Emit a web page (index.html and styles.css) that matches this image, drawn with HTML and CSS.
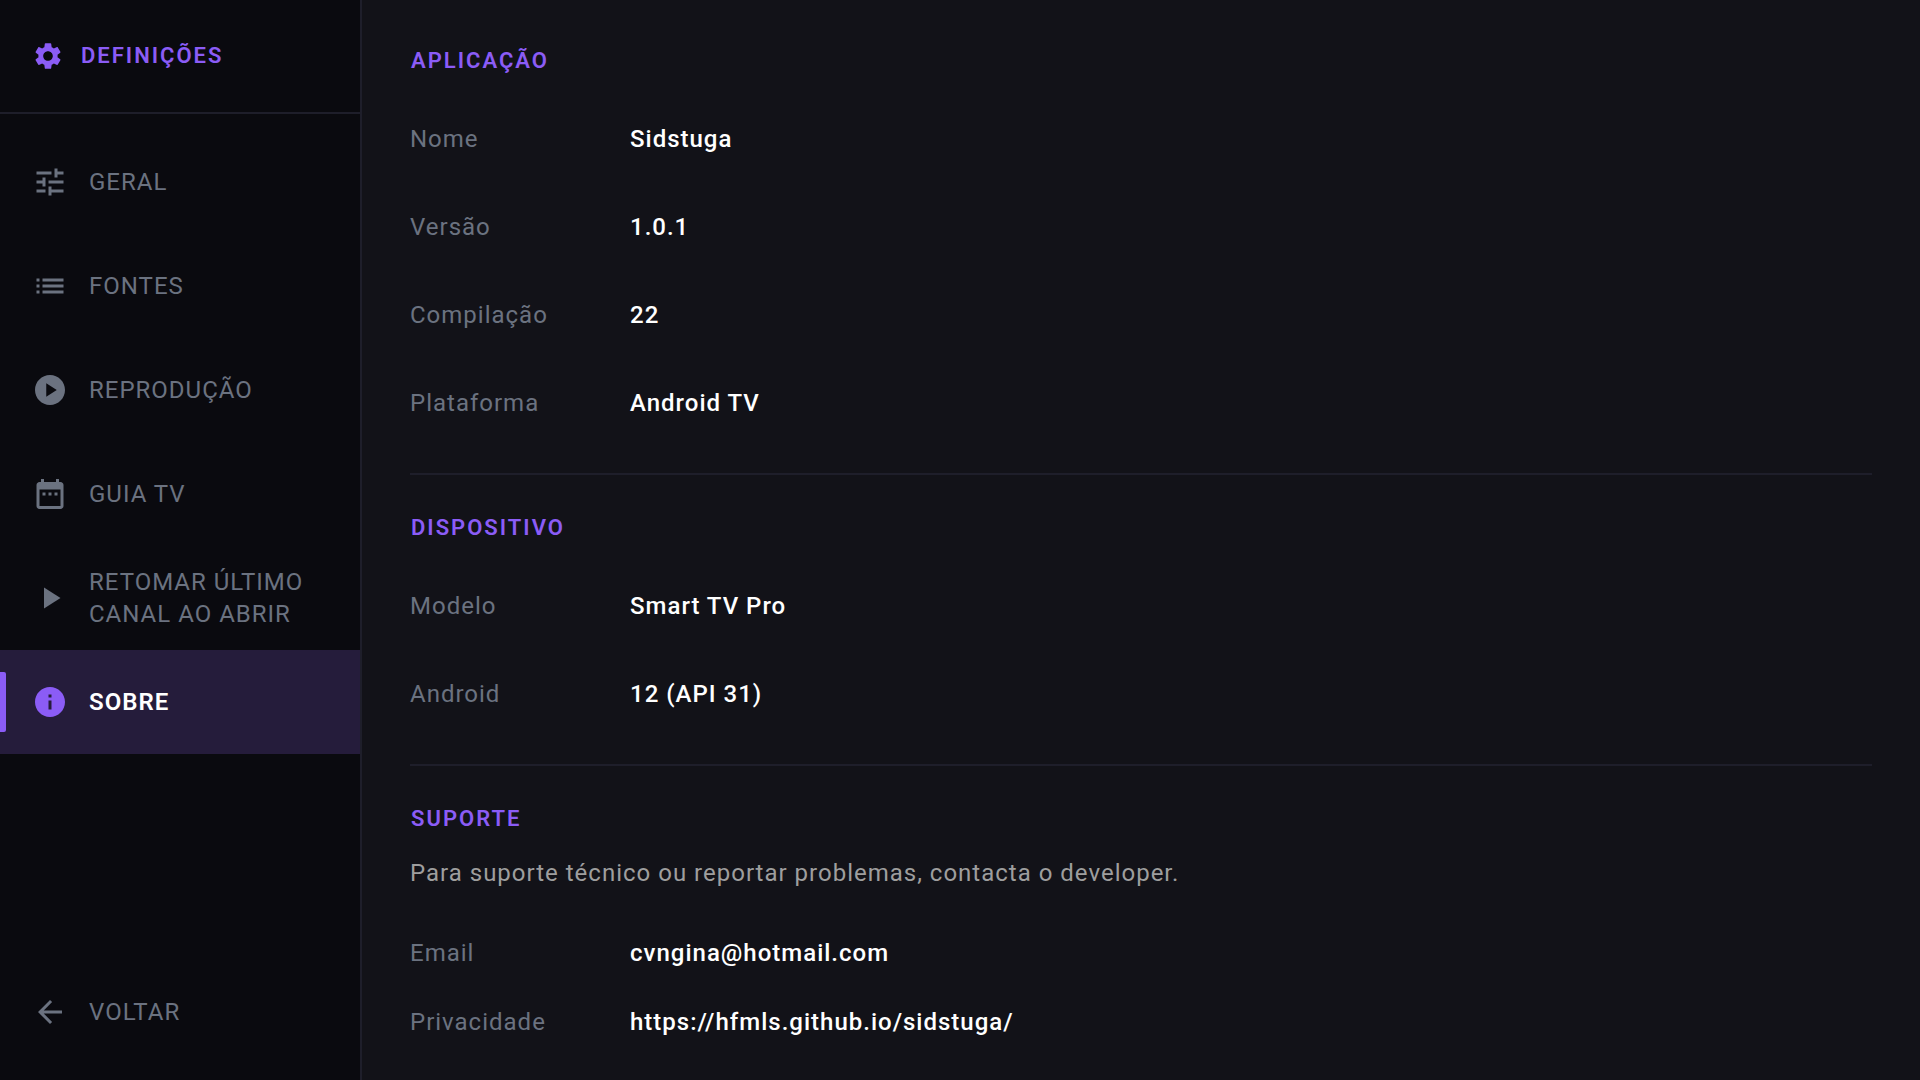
FILE: index.html
```html
<!DOCTYPE html>
<html lang="pt">
<head>
    <meta charset="UTF-8">
    <meta name="viewport" content="width=device-width, initial-scale=1.0">
    <title>Sidstuga - Definições</title>
    <link rel="stylesheet" href="styles.css">
</head>
<body>
    <aside class="sidebar">
        <header class="sidebar-header">
            <svg class="icon-small" viewBox="0 0 24 24" aria-hidden="true"><path d="M19.14 12.94c.04-.3.06-.61.06-.94 0-.32-.02-.64-.07-.94l2.03-1.58c.18-.14.23-.41.12-.61l-1.92-3.32c-.12-.22-.37-.29-.59-.22l-2.39.96c-.5-.38-1.03-.7-1.62-.94L14.4 2.81c-.04-.24-.24-.41-.48-.41h-3.84c-.24 0-.43.17-.47.41l-.36 2.54c-.59.24-1.13.57-1.62.94l-2.39-.96c-.22-.08-.47 0-.59.22L2.74 8.87c-.12.21-.08.47.12.61l2.03 1.58c-.05.3-.09.63-.09.94s.02.64.07.94l-2.03 1.58c-.18.14-.23.41-.12.61l1.92 3.32c.12.22.37.29.59.22l2.39-.96c.5.38 1.03.7 1.62.94l.36 2.54c.05.24.24.41.48.41h3.84c.24 0 .44-.17.47-.41l.36-2.54c.59-.24 1.13-.56 1.62-.94l2.39.96c.22.08.47 0 .59-.22l1.92-3.32c.12-.22.07-.47-.12-.61l-2.01-1.58zM12 15.6c-1.98 0-3.6-1.62-3.6-3.6s1.62-3.6 3.6-3.6 3.6 1.62 3.6 3.6-1.62 3.6-3.6 3.6z"/></svg>
            <h1>DEFINIÇÕES</h1>
        </header>

        <nav class="menu">
            <button class="menu-item" type="button">
                <svg class="icon" viewBox="0 0 24 24" aria-hidden="true"><path d="M3 17v2h6v-2H3zM3 5v2h10V5H3zm10 16v-2h8v-2h-8v-2h-2v6h2zM7 9v2H3v2h4v2h2V9H7zm14 4v-2H11v2h10zm-6-4h2V7h4V5h-4V3h-2v6z"/></svg>
                <span>GERAL</span>
            </button>
            <button class="menu-item" type="button">
                <svg class="icon" viewBox="0 0 24 24" aria-hidden="true"><path d="M3 13h2v-2H3v2zm0 4h2v-2H3v2zm0-8h2V7H3v2zm4 4h14v-2H7v2zm0 4h14v-2H7v2zM7 7v2h14V7H7z"/></svg>
                <span>FONTES</span>
            </button>
            <button class="menu-item" type="button">
                <svg class="icon" viewBox="0 0 24 24" aria-hidden="true"><path d="M12 2C6.48 2 2 6.48 2 12s4.48 10 10 10 10-4.48 10-10S17.52 2 12 2zM9.5 16.5v-9l7 4.5-7 4.5z"/></svg>
                <span>REPRODUÇÃO</span>
            </button>
            <button class="menu-item" type="button">
                <svg class="icon" viewBox="0 0 24 24" aria-hidden="true"><path d="M9 11H7v2h2v-2zm4 0h-2v2h2v-2zm4 0h-2v2h2v-2zm2-7h-1V2h-2v2H8V2H6v2H5c-1.11 0-1.99.9-1.99 2L3 20c0 1.1.89 2 2 2h14c1.1 0 2-.9 2-2V6c0-1.1-.9-2-2-2zm0 16H5V9h14v11z"/></svg>
                <span>GUIA TV</span>
            </button>
            <button class="menu-item" type="button">
                <svg class="icon" viewBox="0 0 24 24" aria-hidden="true"><path d="M8 5v14l11-7z"/></svg>
                <span>RETOMAR ÚLTIMO CANAL AO ABRIR</span>
            </button>
            <button class="menu-item active" type="button" aria-current="page">
                <svg class="icon" viewBox="0 0 24 24" aria-hidden="true"><path d="M12 2C6.48 2 2 6.48 2 12s4.48 10 10 10 10-4.48 10-10S17.52 2 12 2zm1 15h-2v-6h2v6zm0-8h-2V7h2v2z"/></svg>
                <span>SOBRE</span>
            </button>
        </nav>

        <button class="menu-item back" type="button">
            <svg class="icon" viewBox="0 0 24 24" aria-hidden="true"><path d="M20 11H7.83l5.59-5.59L12 4l-8 8 8 8 1.41-1.41L7.83 13H20v-2z"/></svg>
            <span>VOLTAR</span>
        </button>
    </aside>

    <main class="content">
        <section class="section">
            <h2>APLICAÇÃO</h2>
            <dl class="info">
                <div class="row"><dt>Nome</dt><dd>Sidstuga</dd></div>
                <div class="row"><dt>Versão</dt><dd>1.0.1</dd></div>
                <div class="row"><dt>Compilação</dt><dd>22</dd></div>
                <div class="row"><dt>Plataforma</dt><dd>Android TV</dd></div>
            </dl>
        </section>

        <section class="section">
            <h2>DISPOSITIVO</h2>
            <dl class="info">
                <div class="row"><dt>Modelo</dt><dd>Smart TV Pro</dd></div>
                <div class="row"><dt>Android</dt><dd>12 (API 31)</dd></div>
            </dl>
        </section>

        <section class="section">
            <h2>SUPORTE</h2>
            <p class="note">Para suporte técnico ou reportar problemas, contacta o developer.</p>
            <dl class="info contacts">
                <div class="row"><dt>Email</dt><dd><a href="mailto:cvngina@hotmail.com">cvngina@hotmail.com</a></dd></div>
                <div class="row"><dt>Privacidade</dt><dd><a href="https://hfmls.github.io/sidstuga/">https://hfmls.github.io/sidstuga/</a></dd></div>
            </dl>
        </section>
    </main>
</body>
</html>
```
FILE: styles.css
```css
* {
    box-sizing: border-box;
}
body {
    margin: 0;
    min-height: 100vh;
    display: flex;
    background: #121218;
    color: #6b7280;
    font-family: Roboto, sans-serif;
    font-size: 24px;
    line-height: 32px;
    letter-spacing: 1px;
}
h1, h2, p, dl, dd {
    margin: 0;
}
h1, h2 {
    padding-left: 1px;
    color: #8b5cf6;
    font-size: 22px;
    font-weight: 600;
    letter-spacing: 2px;
}
h1 {
    line-height: 32px;
}
h2 {
    line-height: 26px;
}
a {
    color: inherit;
    text-decoration: none;
}

/* sidebar */
.sidebar {
    flex: 0 0 362px;
    display: flex;
    flex-direction: column;
    padding-bottom: 16px;
    background: #0a0a0f;
    border-right: 2px solid #1e1e2a;
}
.sidebar-header {
    display: flex;
    align-items: center;
    gap: 16px;
    height: 114px;
    padding: 0 32px;
    color: #8b5cf6;
    border-bottom: 2px solid #1e1e2a;
}
.icon {
    flex: none;
    width: 36px;
    height: 36px;
    fill: currentColor;
}
.icon-small {
    flex: none;
    width: 32px;
    height: 32px;
    fill: currentColor;
}
.menu {
    padding-top: 16px;
}
.menu-item {
    position: relative;
    display: flex;
    align-items: center;
    gap: 21px;
    width: 100%;
    height: 104px;
    padding: 0 32px;
    border: none;
    background: none;
    color: inherit;
    font: inherit;
    letter-spacing: inherit;
    text-align: left;
    cursor: pointer;
}
.menu-item.active {
    background: #251c3b;
    color: #fff;
    font-weight: 600;
}
.menu-item.active .icon {
    color: #8b5cf6;
}
.menu-item.active::before {
    content: "";
    position: absolute;
    left: 0;
    top: 22px;
    width: 6px;
    height: 60px;
    background: #8b5cf6;
    border-radius: 0 2px 2px 0;
}
.back {
    margin-top: auto;
}

/* content */
.content {
    flex: 1;
    padding: 48px 48px 0;
}
.section + .section {
    margin-top: 26px;
    padding-top: 40px;
    border-top: 2px solid #1e1e2a;
}
.info {
    padding-top: 21px;
}
.row {
    display: flex;
    padding: 28px 0;
}
dt {
    flex: 0 0 220px;
}
dd {
    color: #fff;
    font-weight: 500;
}
.note {
    margin-top: 25px;
    color: #9e9e9e;
}
.contacts {
    display: flex;
    flex-direction: column;
    gap: 37px;
    padding-top: 48px;
}
.contacts .row {
    padding: 0;
}
```
